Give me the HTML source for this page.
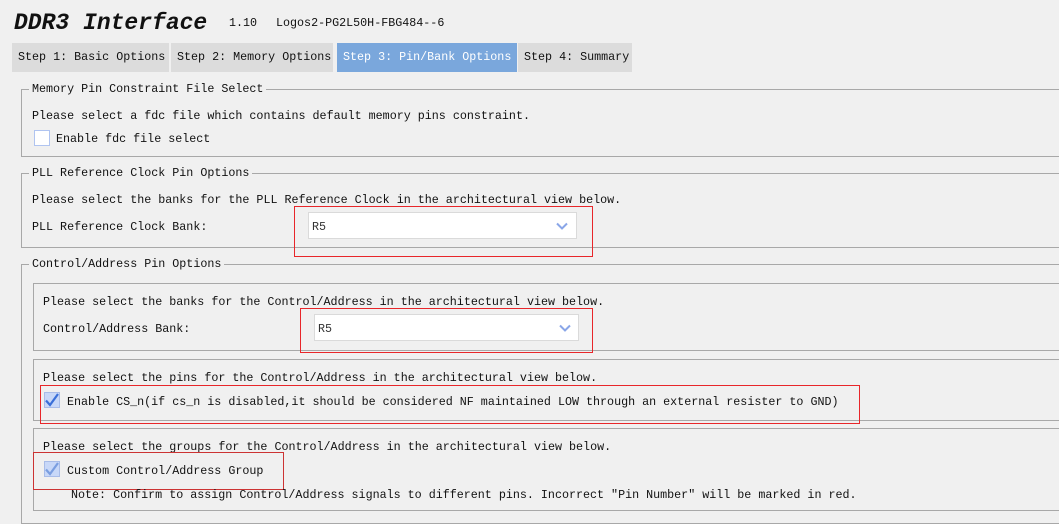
<!DOCTYPE html><html><head><style>
body{margin:0;width:1059px;height:517px;background:#f0f0f0;position:relative;overflow:hidden;font-family:"Liberation Mono",monospace;font-size:11.7px;color:#111}
div,span,svg{position:absolute;box-sizing:border-box}
.t{white-space:nowrap;line-height:14px}
.tab{top:43px;height:29px;background:#dcdcdc;line-height:29px;padding-left:6px;white-space:nowrap}
.grp{border:1px solid #a8a8a8;border-right:none}
.lg{background:#f0f0f0;padding:0 3px;white-space:nowrap;line-height:14px}
.cb{background:#fff;border:1px solid #dadada}
.red{border:1px solid #e8262a}
.chk{width:16px;height:16px;background:#c8d8f8;border:1px solid #a8bce8}
.box{background:#fff;border:1px solid #b0c4f0}
</style></head><body>
<div class="t" style="left:14px;top:10px;font-size:23px;line-height:26px;font-weight:bold;font-style:italic;font-family:'Liberation Mono',monospace">DDR3 Interface</div>
<div class="t" style="left:229px;top:16px">1.10</div>
<div class="t" style="left:276px;top:16px">Logos2-PG2L50H-FBG484--6</div>
<div class="tab" style="left:12px;width:157px">Step 1: Basic Options</div>
<div class="tab" style="left:171px;width:162px">Step 2: Memory Options</div>
<div class="tab" style="left:337px;width:180px;background:#7aa7dc;color:#fff">Step 3: Pin/Bank Options</div>
<div class="tab" style="left:518px;width:114px">Step 4: Summary</div>

<div class="grp" style="left:21px;top:89px;width:1040px;height:68px"></div>
<div class="lg" style="left:29px;top:82px">Memory Pin Constraint File Select</div>
<div class="t" style="left:32px;top:109px">Please select a fdc file which contains default memory pins constraint.</div>
<div class="box" style="left:34px;top:130px;width:16px;height:16px"></div>
<div class="t" style="left:56px;top:132px">Enable fdc file select</div>

<div class="grp" style="left:21px;top:173px;width:1040px;height:75px"></div>
<div class="lg" style="left:29px;top:166px">PLL Reference Clock Pin Options</div>
<div class="t" style="left:32px;top:193px">Please select the banks for the PLL Reference Clock in the architectural view below.</div>
<div class="t" style="left:32px;top:220px">PLL Reference Clock Bank:</div>
<div class="cb" style="left:308px;top:212px;width:269px;height:27px"></div>
<div class="t" style="left:312px;top:220px;color:#333">R5</div>
<svg style="left:556px;top:222px" width="12" height="8" viewBox="0 0 12 8"><path d="M1 1.5L6 6.5L11 1.5" fill="none" stroke="#8aa6e8" stroke-width="2"/></svg>
<div class="red" style="left:294px;top:206px;width:299px;height:51px"></div>

<div class="grp" style="left:21px;top:264px;width:1040px;height:260px"></div>
<div class="lg" style="left:29px;top:257px">Control/Address Pin Options</div>

<div class="grp" style="left:33px;top:283px;width:1030px;height:68px"></div>
<div class="t" style="left:43px;top:295px">Please select the banks for the Control/Address in the architectural view below.</div>
<div class="t" style="left:43px;top:322px">Control/Address Bank:</div>
<div class="cb" style="left:314px;top:314px;width:265px;height:27px"></div>
<div class="t" style="left:318px;top:322px;color:#333">R5</div>
<svg style="left:559px;top:324px" width="12" height="8" viewBox="0 0 12 8"><path d="M1 1.5L6 6.5L11 1.5" fill="none" stroke="#8aa6e8" stroke-width="2"/></svg>
<div class="red" style="left:300px;top:308px;width:293px;height:45px"></div>

<div class="grp" style="left:33px;top:359px;width:1030px;height:62px"></div>
<div class="t" style="left:43px;top:371px">Please select the pins for the Control/Address in the architectural view below.</div>
<div class="chk" style="left:44px;top:392px"></div>
<svg style="left:44px;top:392px" width="16" height="16" viewBox="0 0 16 16"><path d="M2 8.5L6 13L14 2" fill="none" stroke="#3a6fd8" stroke-width="2.2"/></svg>
<div class="t" style="left:67px;top:395px">Enable CS_n(if cs_n is disabled,it should be considered NF maintained LOW through an external resister to GND)</div>
<div class="red" style="left:40px;top:385px;width:820px;height:39px"></div>

<div class="grp" style="left:33px;top:428px;width:1030px;height:83px"></div>
<div class="t" style="left:43px;top:440px">Please select the groups for the Control/Address in the architectural view below.</div>
<div class="chk" style="left:44px;top:461px"></div>
<svg style="left:44px;top:461px" width="16" height="16" viewBox="0 0 16 16"><path d="M2 8.5L6 13L14 2" fill="none" stroke="#7a9ee0" stroke-width="2.2"/></svg>
<div class="t" style="left:67px;top:464px">Custom Control/Address Group</div>
<div class="red" style="left:33px;top:452px;width:251px;height:38px;border-color:#c33"></div>
<div class="t" style="left:71px;top:488px">Note: Confirm to assign Control/Address signals to different pins. Incorrect "Pin Number" will be marked in red.</div>
</body></html>
